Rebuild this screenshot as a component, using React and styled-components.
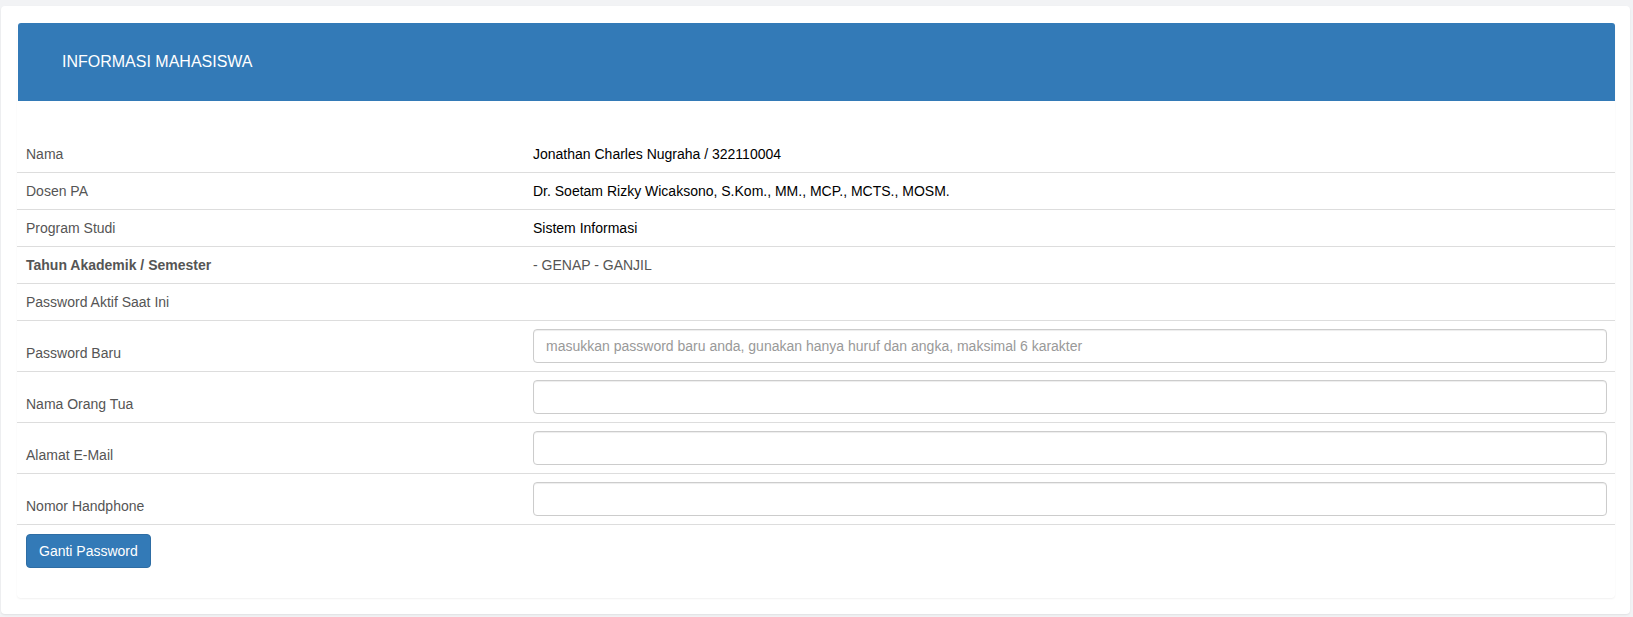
import styled, { createGlobalStyle } from "styled-components";

const GlobalStyle = createGlobalStyle`
  html, body {
    margin: 0;
    padding: 0;
    background: #f2f3f5;
  }
  body {
    font-family: "Liberation Sans", Arial, sans-serif;
    font-size: 14px;
    line-height: 20px;
    color: #333;
  }
`;

const Page = styled.div`
  padding: 6px 3px 3px 1px;
`;

const Card = styled.div`
  background: #fff;
  border-radius: 4px;
  box-shadow: 0 1px 2px rgba(0, 0, 0, 0.08);
  padding: 17px 15px 16px 16px;
`;

const Panel = styled.div`
  background: #fff;
  border-radius: 4px;
  box-shadow: 0 1px 2px rgba(0, 0, 0, 0.06);
  padding-bottom: 30px;
`;

const Heading = styled.div`
  height: 78px;
  margin-left: 1px;
  background: #337ab7;
  border-radius: 3px 3px 0 0;
  color: #fff;
  font-size: 16px;
  display: flex;
  align-items: center;
  padding: 0 44px;
`;

const Body = styled.div`
  padding-top: 35px;
`;

const Row = styled.div`
  display: grid;
  grid-template-columns: 508px 1fr;
  border-bottom: 1px solid #ddd;
`;

const Label = styled.div`
  padding: 8px 8px 8px 9px;
  color: #555;
  font-weight: ${(p) => (p.bold ? 700 : 400)};
  align-self: ${(p) => (p.bottom ? "end" : "start")};
`;

const Value = styled.div`
  padding: 8px;
  color: ${(p) => (p.muted ? "#555" : "#000")};
  min-height: 20px;
`;

const Input = styled.input`
  display: block;
  box-sizing: border-box;
  width: 100%;
  height: 34px;
  padding: 6px 12px;
  font-family: inherit;
  font-size: 14px;
  color: #555;
  background: #fff;
  border: 1px solid #ccc;
  border-radius: 4px;
  box-shadow: inset 0 1px 1px rgba(0, 0, 0, 0.075);
  outline: none;

  &::placeholder {
    color: #999;
  }
`;

const Actions = styled.div`
  padding: 9px 9px 0;
`;

const Button = styled.button`
  height: 34px;
  padding: 6px 12px;
  font-family: inherit;
  font-size: 14px;
  line-height: 20px;
  color: #fff;
  background: #337ab7;
  border: 1px solid #2e6da4;
  border-radius: 4px;
  cursor: pointer;
`;

const info = [
  { label: "Nama", value: "Jonathan Charles Nugraha / 322110004" },
  {
    label: "Dosen PA",
    value: "Dr. Soetam Rizky Wicaksono, S.Kom., MM., MCP., MCTS., MOSM.",
  },
  { label: "Program Studi", value: "Sistem Informasi" },
  {
    label: "Tahun Akademik / Semester",
    value: "- GENAP - GANJIL",
    bold: true,
    muted: true,
  },
  { label: "Password Aktif Saat Ini", value: "" },
];

const fields = [
  {
    label: "Password Baru",
    placeholder:
      "masukkan password baru anda, gunakan hanya huruf dan angka, maksimal 6 karakter",
  },
  { label: "Nama Orang Tua" },
  { label: "Alamat E-Mail" },
  { label: "Nomor Handphone" },
];

const App = () => {
  return (
    <>
      <GlobalStyle />
      <Page>
        <Card>
          <Panel>
            <Heading>INFORMASI MAHASISWA</Heading>
            <Body>
              {info.map((row) => (
                <Row key={row.label}>
                  <Label bold={row.bold}>{row.label}</Label>
                  <Value muted={row.muted}>{row.value}</Value>
                </Row>
              ))}
              {fields.map((f) => (
                <Row key={f.label}>
                  <Label bottom>{f.label}</Label>
                  <Value>
                    <Input type="text" placeholder={f.placeholder || ""} />
                  </Value>
                </Row>
              ))}
              <Actions>
                <Button type="button">Ganti Password</Button>
              </Actions>
            </Body>
          </Panel>
        </Card>
      </Page>
    </>
  );
};

export default App;
